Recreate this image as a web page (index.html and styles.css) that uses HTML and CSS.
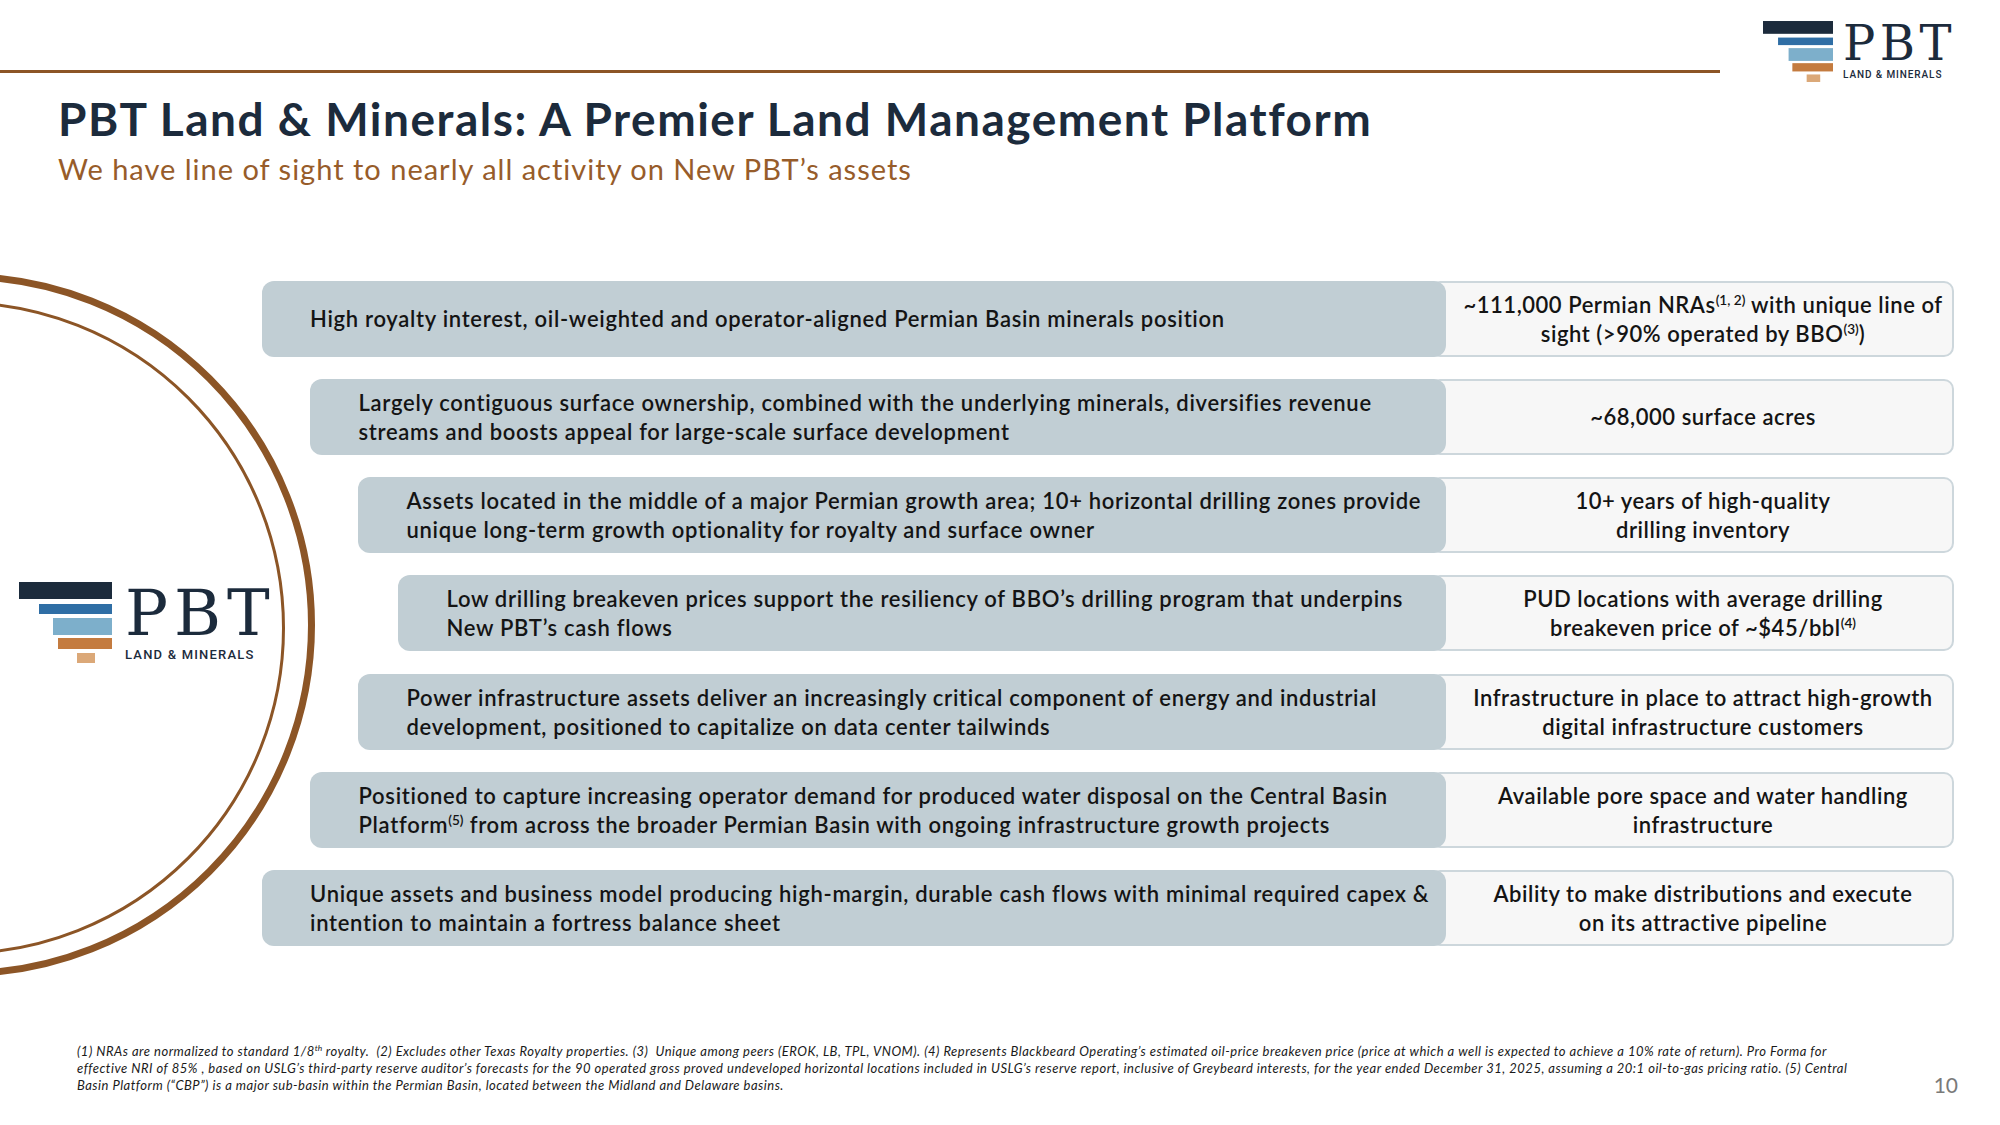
FILE: index.html
```html
<!DOCTYPE html>
<html lang="en">
<head>
<meta charset="utf-8">
<title>PBT Land &amp; Minerals</title>
<link rel="stylesheet" href="styles.css">
</head>
<body>
<div class="slide">
  <div class="ring ring-outer"></div>
  <div class="ring ring-inner"></div>

  <header class="top">
    <div class="rule"></div>
    <div class="logo logo-sm">
      <svg class="bars" viewBox="0 0 93 81" width="70" height="61" aria-hidden="true">
        <rect x="0" y="0" width="93" height="17" fill="#1c2b3c"/>
        <rect x="20" y="22" width="73" height="10" fill="#2f6ea5"/>
        <rect x="34" y="36" width="59" height="17" fill="#7dafcb"/>
        <rect x="39" y="56" width="54" height="11" fill="#c47b3f"/>
        <rect x="58" y="71" width="18" height="10" fill="#dba878"/>
      </svg>
      <div class="wordmark">
        <div class="pbt">PBT</div>
        <div class="tag">LAND &amp; MINERALS</div>
      </div>
    </div>
  </header>

  <div class="heading">
    <h1 class="title">PBT Land &amp; Minerals: A Premier Land Management Platform</h1>
    <p class="sub">We have line of sight to nearly all activity on New PBT’s assets</p>
  </div>

  <main class="content">
    <div class="brand">
      <div class="logo logo-lg">
        <svg class="bars" viewBox="0 0 93 81" width="93" height="81" aria-hidden="true">
          <rect x="0" y="0" width="93" height="17" fill="#1c2b3c"/>
          <rect x="20" y="22" width="73" height="10" fill="#2f6ea5"/>
          <rect x="34" y="36" width="59" height="17" fill="#7dafcb"/>
          <rect x="39" y="56" width="54" height="11" fill="#c47b3f"/>
          <rect x="58" y="71" width="18" height="10" fill="#dba878"/>
        </svg>
        <div class="wordmark">
          <div class="pbt">PBT</div>
          <div class="tag">LAND &amp; MINERALS</div>
        </div>
      </div>
    </div>

    <div class="rows">
      <div class="row">
        <div class="pill"><span class="txt">High royalty interest, oil-weighted and operator-aligned Permian Basin minerals position</span></div>
        <div class="stat"><span class="txt">~111,000 Permian NRAs<sup>(1, 2)</sup> with unique line of<br>sight (&gt;90% operated by BBO<sup>(3)</sup>)</span></div>
      </div>
      <div class="row in-1">
        <div class="pill"><span class="txt">Largely contiguous surface ownership, combined with the underlying minerals, diversifies revenue<br>streams and boosts appeal for large-scale surface development</span></div>
        <div class="stat"><span class="txt">~68,000 surface acres</span></div>
      </div>
      <div class="row in-2">
        <div class="pill"><span class="txt">Assets located in the middle of a major Permian growth area; 10+ horizontal drilling zones provide<br>unique long-term growth optionality for royalty and surface owner</span></div>
        <div class="stat"><span class="txt">10+ years of high-quality<br>drilling inventory</span></div>
      </div>
      <div class="row in-3">
        <div class="pill"><span class="txt">Low drilling breakeven prices support the resiliency of BBO’s drilling program that underpins<br>New PBT’s cash flows</span></div>
        <div class="stat"><span class="txt">PUD locations with average drilling<br>breakeven price of ~$45/bbl<sup>(4)</sup></span></div>
      </div>
      <div class="row in-2">
        <div class="pill"><span class="txt">Power infrastructure assets deliver an increasingly critical component of energy and industrial<br>development, positioned to capitalize on data center tailwinds</span></div>
        <div class="stat"><span class="txt">Infrastructure in place to attract high-growth<br>digital infrastructure customers</span></div>
      </div>
      <div class="row in-1">
        <div class="pill"><span class="txt">Positioned to capture increasing operator demand for produced water disposal on the Central Basin<br>Platform<sup>(5)</sup> from across the broader Permian Basin with ongoing infrastructure growth projects</span></div>
        <div class="stat"><span class="txt">Available pore space and water handling<br>infrastructure</span></div>
      </div>
      <div class="row">
        <div class="pill"><span class="txt">Unique assets and business model producing high-margin, durable cash flows with minimal required capex &amp;<br>intention to maintain a fortress balance sheet</span></div>
        <div class="stat"><span class="txt">Ability to make distributions and execute<br>on its attractive pipeline</span></div>
      </div>
    </div>
  </main>

  <footer class="foot">
    <p class="notes">(1) NRAs are normalized to standard 1/8<sup>th</sup> royalty.&nbsp; (2) Excludes other Texas Royalty properties. (3)&nbsp; Unique among peers (EROK, LB, TPL, VNOM). (4) Represents Blackbeard Operating’s estimated oil-price breakeven price (price at which a well is expected to achieve a 10% rate of return). Pro Forma for<br>effective NRI of 85% , based on USLG’s third-party reserve auditor’s forecasts for the 90 operated gross proved undeveloped horizontal locations included in USLG’s reserve report, inclusive of Greybeard interests, for the year ended December 31, 2025, assuming a 20:1 oil-to-gas pricing ratio. (5) Central<br>Basin Platform (“CBP”) is a major sub-basin within the Permian Basin, located between the Midland and Delaware basins.</p>
    <span class="page">10</span>
  </footer>
</div>
</body>
</html>
```

FILE: styles.css
```css
* { box-sizing: border-box; }

html, body {
  margin: 0;
  padding: 0;
  background: #ffffff;
}

.slide {
  position: relative;
  width: 2000px;
  height: 1125px;
  overflow: hidden;
  background: #ffffff;
  font-family: Lato, "Liberation Sans", sans-serif;
  color: #141414;
}

/* decorative rings behind the content */
.ring {
  position: absolute;
  border-radius: 50%;
  border-style: solid;
  border-color: #8c5526;
  pointer-events: none;
}
.ring-outer {
  left: -389px;
  top: 273px;
  width: 704px;
  height: 704px;
  border-width: 7px;
}
.ring-inner {
  left: -369px;
  top: 301px;
  width: 654px;
  height: 654px;
  border-width: 3px;
}

/* header */
.top {
  display: flex;
  align-items: flex-start;
  height: 93px;
  padding-top: 21px;
}
.rule {
  flex: none;
  width: 1720px;
  height: 3px;
  margin-top: 49px;
  background: #8c5526;
}

.logo {
  display: flex;
  align-items: flex-start;
}
.bars { display: block; flex: none; }
.wordmark { color: #1c2b3c; }
.pbt {
  font-family: "DejaVu Serif", "Liberation Serif", serif;
  line-height: 1;
  white-space: nowrap;
}
.tag {
  font-family: Roboto, "Liberation Sans", sans-serif;
  font-weight: 500;
  white-space: nowrap;
}

.logo-sm { margin-left: 43px; }
.logo-sm .wordmark { margin-left: 10px; }
.logo-sm .pbt {
  font-size: 48px;
  letter-spacing: 4.5px;
  margin-top: -1.6px;
}
.logo-sm .tag {
  font-size: 10px;
  line-height: 10px;
  letter-spacing: 0.9px;
  margin-top: 2.2px;
}

.logo-lg .wordmark { margin-left: 13px; }
.logo-lg .pbt {
  font-size: 64px;
  letter-spacing: 6px;
  margin-top: -1.5px;
}
.logo-lg .tag {
  font-size: 13px;
  line-height: 13px;
  letter-spacing: 1.2px;
  margin-top: 3.5px;
}

/* heading */
.title {
  margin: 0;
  padding-left: 58px;
  font-size: 46px;
  line-height: 52px;
  font-weight: 700;
  letter-spacing: 1.5px;
  color: #1c2b3c;
  white-space: nowrap;
}
.sub {
  margin: 7px 0 0;
  padding-left: 58px;
  font-size: 29px;
  line-height: 34px;
  font-weight: 400;
  letter-spacing: 1px;
  color: #975c2a;
  white-space: nowrap;
}

/* main content */
.content {
  display: flex;
  margin-top: 94.5px;
  padding-right: 46px;
}
.brand {
  flex: none;
  width: 261.5px;
  padding-left: 19px;
}
.logo-lg { margin-top: 301.5px; }

.rows {
  flex: 1;
  min-width: 0;
  display: flex;
  flex-direction: column;
  gap: 22.3px;
}
.row {
  display: flex;
  height: 76px;
}
.row.in-1 { margin-left: 48.5px; }
.row.in-2 { margin-left: 96.5px; }
.row.in-3 { margin-left: 136.5px; }

.pill {
  position: relative;
  z-index: 1;
  flex: 1;
  min-width: 0;
  display: flex;
  align-items: center;
  padding: 0 10px 0 48.5px;
  background: #c1ced4;
  border-radius: 12px;
}
.stat {
  flex: none;
  width: 524px;
  margin-left: -16px;
  padding-left: 22px;
  display: flex;
  align-items: center;
  justify-content: center;
  text-align: center;
  background: #f7f7f7;
  border: 2px solid #cdd7dc;
  border-radius: 10px;
}
.txt {
  display: block;
  font-size: 22px;
  line-height: 29px;
  font-weight: 600;
  letter-spacing: 0.7px;
  white-space: nowrap;
}
.stat .txt { letter-spacing: 0.55px; }

sup {
  font-size: 0.62em;
  line-height: 0;
  vertical-align: super;
  letter-spacing: 0;
}

/* footer */
.foot {
  display: flex;
  align-items: flex-end;
  justify-content: space-between;
  margin-top: 97px;
  padding: 0 42px 0 77px;
}
.notes {
  margin: 0;
  font-size: 13px;
  line-height: 17px;
  font-style: italic;
  letter-spacing: 0.49px;
  color: #1a1a1a;
  white-space: nowrap;
}
.notes sup { font-size: 0.65em; }
.page {
  font-size: 21px;
  line-height: 21px;
  color: #7a7a7a;
  margin-bottom: -1px;
}
```
